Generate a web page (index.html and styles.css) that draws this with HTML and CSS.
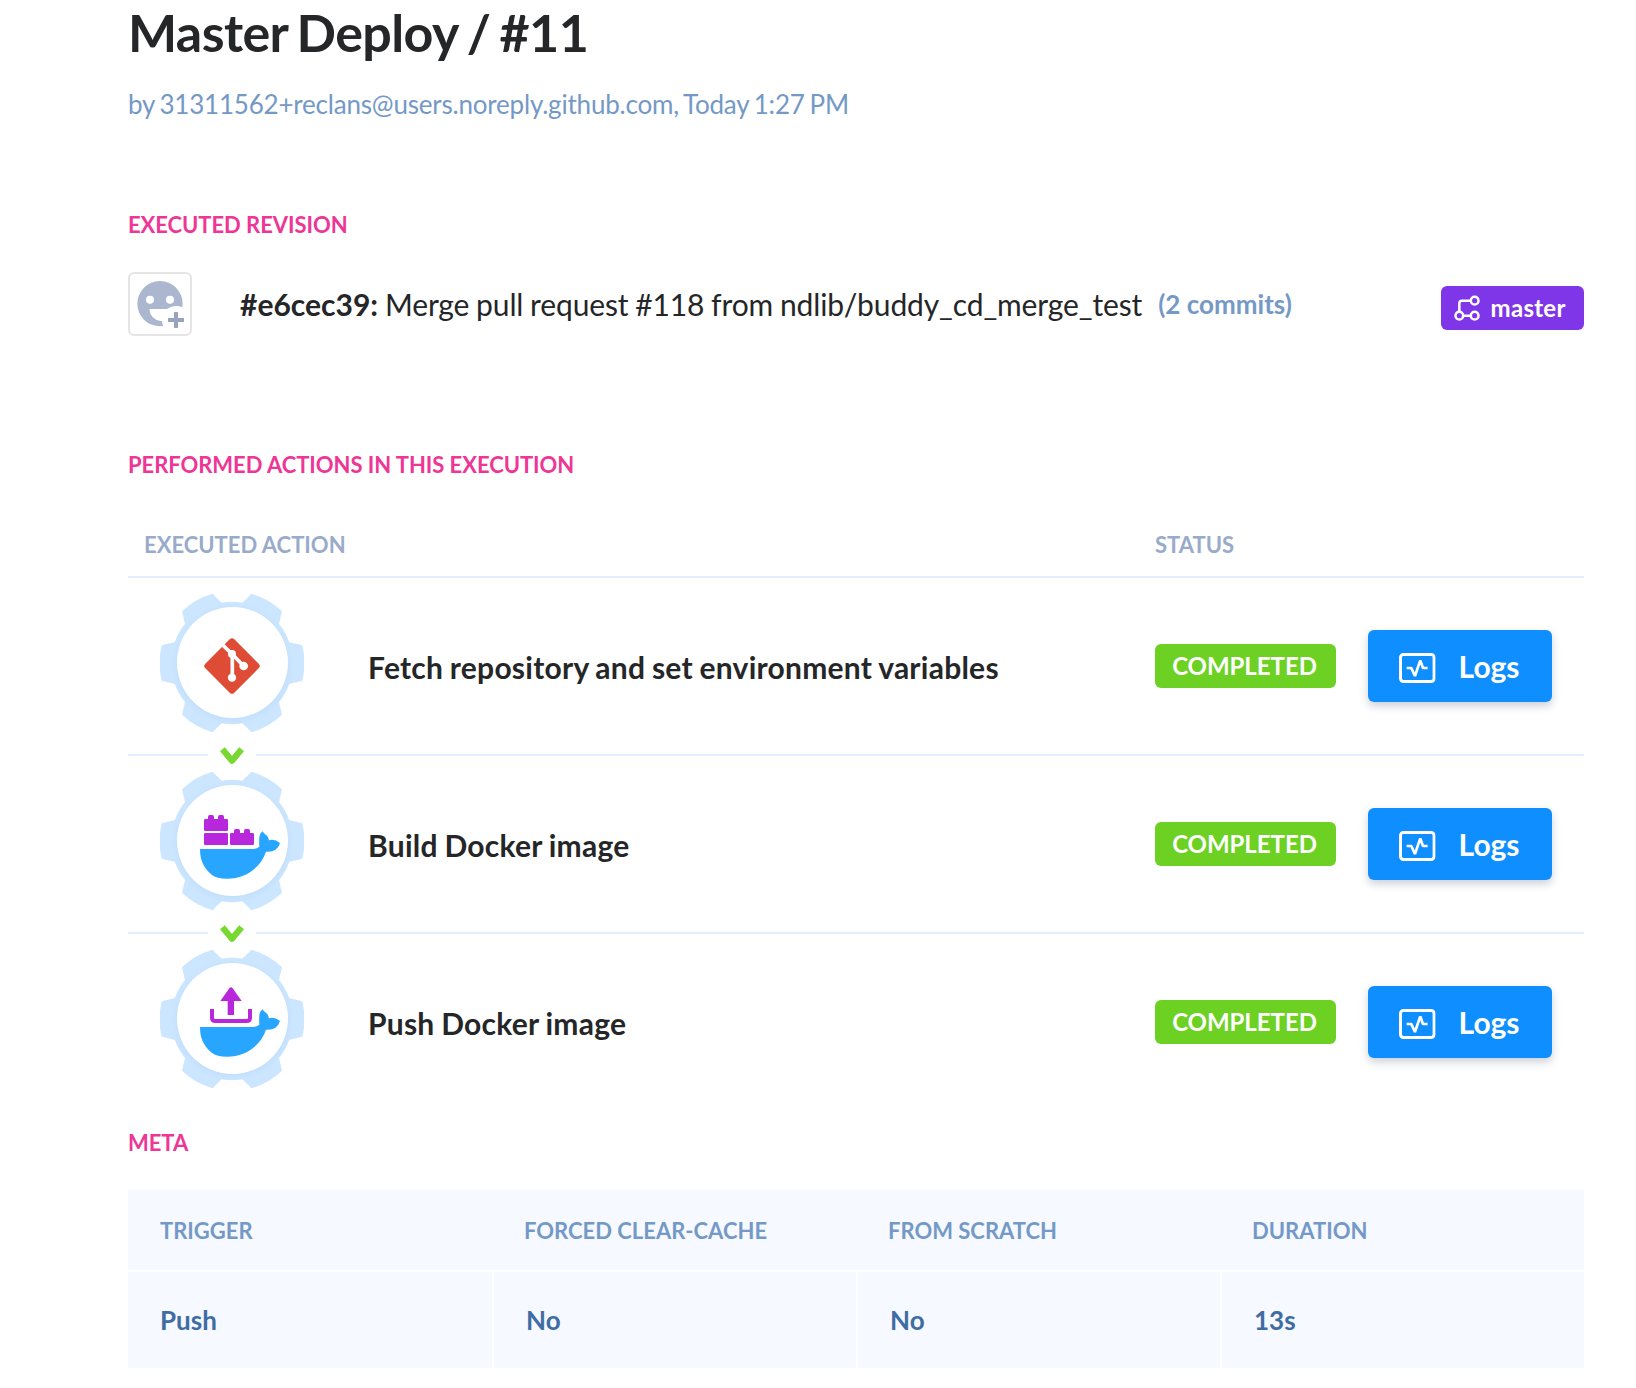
FILE: index.html
```html
<!DOCTYPE html>
<html lang="en">
<head>
<meta charset="utf-8">
<title>Master Deploy / #11</title>
<link rel="stylesheet" href="styles.css">
</head>
<body>
<svg class="sprite" aria-hidden="true">
  <symbol id="gear" viewBox="-72 -72 144 144">
    <path fill="#cce6ff" d="M10.3-60.3 19.5-69.2A72 72 0 0 1 50-51.7L47-39A61 61 0 0 1 57.2-21L70.2-17.7A72 72 0 0 1 70.2 17.7L57.2 21A61 61 0 0 1 47 39L50 51.7A72 72 0 0 1 19.5 69.2L10.3 60.3A61 61 0 0 1-10.3 60.3L-19.5 69.2A72 72 0 0 1-50 51.7L-47 39A61 61 0 0 1-57.2 21L-70.2 17.7A72 72 0 0 1-70.2-17.7L-57.2-21A61 61 0 0 1-47-39L-50-51.7A72 72 0 0 1-19.5-69.2L-10.3-60.3A61 61 0 0 1 10.3-60.3Z"/>
  </symbol>
  <symbol id="whale" viewBox="0 0 432 432">
    <path fill="#27a5ff" transform="translate(-60 -42)" d="M180 282H340Q350 281 358 275Q357 262 358 245Q360 236 367 229Q374 238 382 243Q387 250 386 256Q404 251 420 264Q412 292 378 290C362 338 316 371 262 371Q230 371 215 359C190 338 180 315 180 282Z"/>
  </symbol>
  <symbol id="log" viewBox="0 0 110 90">
    <rect x="4.5" y="4.5" width="101" height="81" rx="9" fill="none" stroke="#fff" stroke-width="9"/>
    <path d="M23 45H37L48 69L64 22L72 45H86" fill="none" stroke="#fff" stroke-width="8" stroke-linejoin="bevel"/>
  </symbol>
  <symbol id="next" viewBox="0 0 24 18">
    <path d="M2.4 2.2 12 13.7 21.6 2.2" fill="none" stroke="#77d82f" stroke-width="6.2" stroke-linejoin="round"/>
  </symbol>
</svg>
<main class="page">
  <h1 class="title">Master Deploy / #11</h1>
  <p class="byline">by 31311562+reclans@users.noreply.github.com, Today 1:27 PM</p>

  <h2 class="label label-revision">EXECUTED REVISION</h2>
  <div class="revision">
    <div class="avatar">
      <svg width="60" height="60" viewBox="60 72 180 180">
        <circle cx="150" cy="161" r="68" fill="#abb7cf"/>
        <circle cx="120" cy="149" r="12" fill="#fff"/>
        <circle cx="180" cy="149" r="12" fill="#fff"/>
        <path d="M118 177H200V213H152Q121 208 118 177Z" fill="#fff"/>
        <circle cx="199" cy="211" r="43" fill="#fff"/>
        <path d="M174 210H222M198 186V234" stroke="#97a3bf" stroke-width="12"/>
      </svg>
    </div>
    <p class="message"><b class="hash">#e6cec39:</b> <span class="subject">Merge pull request #118 from ndlib/buddy_cd_merge_test</span></p>
    <span class="commits">(2 commits)</span>
    <span class="branch">
      <svg width="26" height="26" viewBox="971 74 78 78" fill="none" stroke="#fff" stroke-width="7.5">
        <circle cx="987" cy="136" r="11.5"/><circle cx="1033" cy="136" r="11.5"/><circle cx="1033" cy="91" r="11.5"/>
        <path d="M987 124V99Q987 91 995 91H1021M999 136H1021"/>
      </svg>
      <span class="branch-name">master</span>
    </span>
  </div>

  <h2 class="label label-actions">PERFORMED ACTIONS IN THIS EXECUTION</h2>
  <div class="head"><span class="head-action">EXECUTED ACTION</span><span class="head-status">STATUS</span></div>
  <section class="actions">
    <div class="action">
      <div class="gear">
        <svg class="layer" width="144" height="144"><use href="#gear"/></svg>
        <i class="disc"></i>
        <svg class="layer" width="144" height="144" viewBox="0 0 432 432">
          <g transform="translate(-60 -63)">
            <path d="M269 208Q276 201 283 208L356 281Q363 288 356 295L283 368Q276 375 269 368L196 295Q189 288 196 281Z" fill="#de4c36"/>
            <path d="M246 223 276 252 311 288M277 252V323" fill="none" stroke="#fff" stroke-width="11"/>
            <g fill="#fff"><circle cx="276" cy="252" r="12"/><circle cx="311" cy="288" r="13"/><circle cx="276" cy="323" r="12.5"/></g>
          </g>
        </svg>
      </div>
      <span class="name">Fetch repository and set environment variables</span>
      <span class="status">COMPLETED</span>
      <button class="logs"><svg width="36.6" height="30"><use href="#log"/></svg><span>Logs</span></button>
      <span class="next"><svg width="24" height="18"><use href="#next"/></svg></span>
    </div>
    <div class="action">
      <div class="gear">
        <svg class="layer" width="144" height="144"><use href="#gear"/></svg>
        <i class="disc"></i>
        <svg class="layer" width="144" height="144"><use href="#whale"/></svg>
        <svg class="layer" width="144" height="144" viewBox="60 42 432 432" fill="#b927dd">
          <rect x="192" y="192" width="72" height="36" rx="4"/><rect x="192" y="234" width="72" height="36" rx="4"/><rect x="270" y="234" width="72" height="36" rx="4"/>
          <rect x="204" y="180" width="18" height="20" rx="5"/><rect x="234" y="180" width="18" height="20" rx="5"/>
          <rect x="282" y="222" width="18" height="20" rx="5"/><rect x="312" y="222" width="18" height="20" rx="5"/>
        </svg>
      </div>
      <span class="name">Build Docker image</span>
      <span class="status">COMPLETED</span>
      <button class="logs"><svg width="36.6" height="30"><use href="#log"/></svg><span>Logs</span></button>
      <span class="next"><svg width="24" height="18"><use href="#next"/></svg></span>
    </div>
    <div class="action">
      <div class="gear">
        <svg class="layer" width="144" height="144"><use href="#gear"/></svg>
        <i class="disc"></i>
        <svg class="layer" width="144" height="144"><use href="#whale"/></svg>
        <svg class="layer" width="144" height="144" viewBox="60 51 432 432">
          <path d="M241 213 268 175Q273 169 278 175L305 213H282V255H263V213Z" fill="#b927dd"/>
          <path d="M216 237V263Q216 273 226 273H320Q330 273 330 263V237" fill="none" stroke="#b927dd" stroke-width="12"/>
        </svg>
      </div>
      <span class="name">Push Docker image</span>
      <span class="status">COMPLETED</span>
      <button class="logs"><svg width="36.6" height="30"><use href="#log"/></svg><span>Logs</span></button>
    </div>
  </section>

  <h2 class="label label-meta">META</h2>
  <div class="meta">
    <span class="key">TRIGGER</span><span class="key">FORCED CLEAR-CACHE</span><span class="key">FROM SCRATCH</span><span class="key">DURATION</span>
    <span class="value">Push</span><span class="value">No</span><span class="value">No</span><span class="value">13s</span>
  </div>
</main>
</body>
</html>
```
FILE: styles.css
```css
* { box-sizing: border-box; }
body {
  margin: 0;
  background: #fff;
  color: #242628;
  font-family: Lato, "Liberation Sans", sans-serif;
}
h1, h2, p { margin: 0; }
svg { display: block; flex: none; }
.sprite { display: none; }
.page {
  width: 1584px;
  height: 1388px;
  padding-left: 128px;
  overflow: hidden;
  white-space: nowrap;
}
.title {
  font-size: 52px;
  line-height: 64px;
  font-weight: 700;
  letter-spacing: -.6px;
  word-spacing: -2.8px;
}
.byline {
  margin-top: 24px;
  font-size: 26px;
  line-height: 32px;
  letter-spacing: -.2px;
  word-spacing: -1.6px;
  color: #7499c6;
}
.label {
  font-size: 22px;
  line-height: 29px;
  font-weight: 700;
  letter-spacing: -.05px;
  color: #ee3696;
}
.label-revision { margin-top: 90px; }
.revision {
  display: flex;
  align-items: center;
  height: 64px;
  margin-top: 33px;
}
.avatar {
  width: 64px;
  height: 64px;
  border: 2px solid #e5e5e5;
  border-radius: 6px;
}
.message {
  margin-left: 48px;
  font-size: 30px;
  line-height: 36px;
  word-spacing: -.8px;
}
.hash { font-weight: 700; }
.subject { letter-spacing: -.12px; }
.commits {
  margin-left: 16px;
  font-size: 26px;
  line-height: 32px;
  font-weight: 700;
  color: #7499c6;
}
.branch {
  display: flex;
  align-items: center;
  gap: 11px;
  width: 143px;
  height: 44px;
  margin: 8px 0 0 auto;
  padding-left: 12.5px;
  border-radius: 6px;
  background: #7f36e8;
  color: #fff;
  font-size: 24px;
  line-height: 30px;
  font-weight: 700;
  letter-spacing: .3px;
}
.label-actions { margin-top: 114px; }
.head {
  display: flex;
  height: 99px;
  padding: 51px 0 0 16px;
  border-bottom: 2px solid #e2eeff;
  font-size: 22px;
  line-height: 29px;
  font-weight: 700;
  color: #98abca;
}
.head-action { width: 1011px; }
.action {
  position: relative;
  display: flex;
  align-items: center;
  height: 178px;
  padding: 0 32px;
  border-bottom: 2px solid #e2eeff;
}
.action:last-child { border-bottom-color: transparent; }
.gear {
  position: relative;
  width: 144px;
  height: 144px;
  margin-top: -6px;
}
.layer { position: absolute; left: 0; top: 0; }
.disc {
  position: absolute;
  left: 16.5px;
  top: 16.2px;
  width: 111px;
  height: 111px;
  border-radius: 50%;
  background: #fff;
  box-shadow: 0 2px 6px rgba(120, 165, 215, .15);
}
.name {
  width: 787px;
  margin: 2px 0 0 64px;
  font-size: 30px;
  line-height: 36px;
  font-weight: 700;
  letter-spacing: .25px;
  word-spacing: -.9px;
}
.status {
  width: 181px;
  padding-right: 2px;
  border-radius: 6px;
  background: #6cd122;
  color: #fff;
  font-size: 24px;
  line-height: 44px;
  font-weight: 700;
  letter-spacing: -.05px;
  text-align: center;
}
.logs {
  display: flex;
  align-items: center;
  gap: 23px;
  width: 184px;
  height: 72px;
  margin-left: 32px;
  padding: 0 0 0 31px;
  border: 0;
  border-radius: 6px;
  background: #0f8eff;
  box-shadow: 0 4px 8px rgba(20, 40, 80, .22);
  color: #fff;
  font: 700 30px/36px Lato, "Liberation Sans", sans-serif;
}
.logs svg { margin-top: 4px; }
.next {
  position: absolute;
  left: 80px;
  bottom: -12px;
  width: 48px;
  height: 20px;
  padding: 1px 12px 0;
  background: #fff;
  z-index: 1;
}
.label-meta { margin-top: 16px; }
.meta {
  display: grid;
  grid-template-columns: repeat(4, 364px);
  grid-template-rows: 80px 96px;
  row-gap: 2px;
  margin-top: 33px;
}
.key, .value { padding-left: 32px; background: #f6f9ff; }
.key { font-size: 22px; line-height: 81px; font-weight: 700; color: #7499c6; }
.value { font-size: 26px; line-height: 96px; font-weight: 700; color: #3f6ca3; }
.value + .value { border-left: 2px solid #fff; }
```
